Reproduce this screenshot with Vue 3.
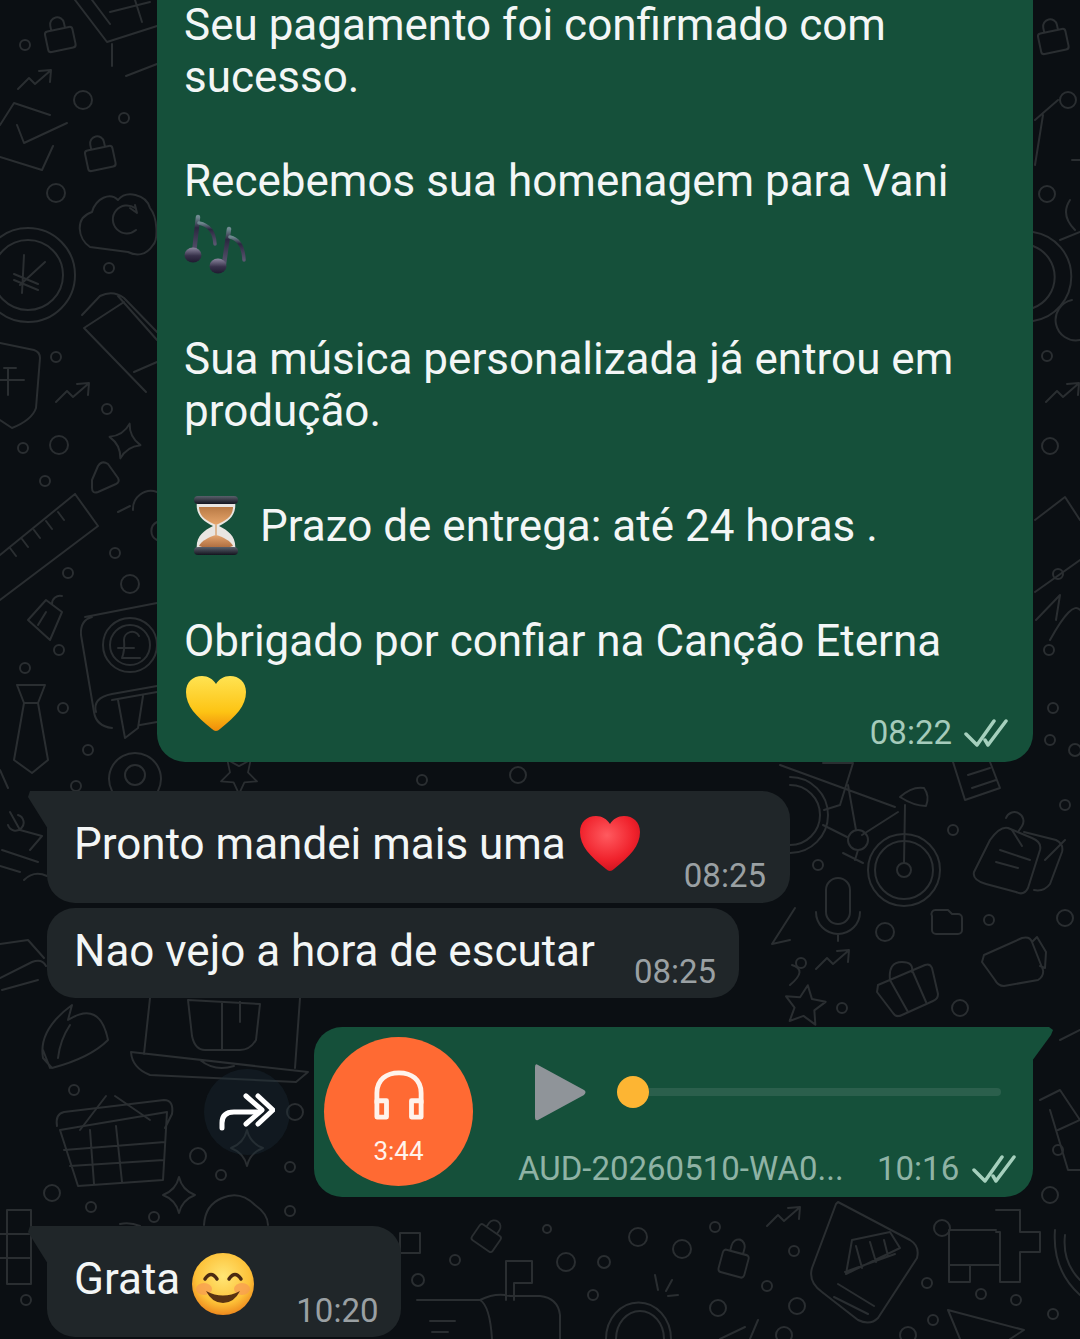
<script setup>
const dots = [
  [25,45,5],[83,100,9],[124,118,5],[56,193,9],[109,268,5],[56,357,5],[107,409,5],[59,445,9],[23,448,5],[45,481,5],
  [115,553,5],[68,573,5],[130,584,9],[59,650,5],[25,668,5],[63,708,5],[88,750,5],[76,786,5],
  [28,275,47],[28,275,35],[130,645,27],[130,645,20],
  [904,870,36],[904,870,29],[904,870,7],[858,840,10],
  [1047,194,8],[1047,356,5],[1050,446,8],[1058,574,5],[1049,650,5],[1068,100,8],[1053,708,5],
  [422,780,5],[518,775,8],[953,830,5],[818,865,5],[989,920,5],[1065,918,8],[885,932,9],[801,963,5],[842,1008,5],[960,1008,8],
  [1050,740,5],[1075,750,6],[1065,805,5],
  [74,1090,5],[198,1156,8],[221,1175,5],[290,1167,5],[295,1112,8],[52,1193,8],[91,1207,5],[154,1217,5],[290,1211,5],[26,1300,5],
  [1058,1150,5],[1050,1195,8],
  [547,1229,4],[638,1237,9],[682,1249,9],[455,1260,5],[566,1262,9],[604,1262,6],[418,1280,6],[593,1295,5],
  [715,1227,5],[794,1251,5],[767,1286,5],[718,1308,8],[797,1306,8],[942,1228,8],[927,1283,5],[981,1294,5],[1016,1300,5],[933,1320,5],[1053,1314,5],[908,1335,8],[784,1335,8]
]

const LOCK = 'M-11 -9h22a3 3 0 0 1 3 3v15a3 3 0 0 1-3 3h-22a3 3 0 0 1-3-3v-15a3 3 0 0 1 3-3zM-7 -9v-5a7 7 0 0 1 14 0v5'
const TREND = 'M-17 9L-6 -2L0 4L15 -9M4 -9L16 -10L15 2'
const STAR4 = 'M0 -18Q3 -5 16 0Q3 5 0 18Q-3 5 -16 0Q-3 -5 0 -18z'
const STAR5 = 'M0 -20L6 -7L20 -6L10 4L13 18L0 11L-13 18L-10 4L-20 -6L-6 -7z'

const shapes = [
  { t: 'translate(60 38) rotate(-12)', d: LOCK },
  { t: 'translate(100 157) rotate(-12)', d: LOCK },
  { t: 'translate(1053 40) rotate(-12)', d: LOCK },
  { t: 'translate(35 80)', d: TREND },
  { t: 'translate(73 393)', d: TREND },
  { t: 'translate(1063 393)', d: TREND },
  { t: 'translate(833 960)', d: TREND },
  { t: 'translate(784 1217)', d: TREND },
  { t: 'translate(125 441) rotate(15)', d: STAR4 },
  { t: 'translate(179 1195)', d: STAR4 },
  { t: 'translate(247 1148)', d: STAR4 },
  { t: 'translate(805 1005) rotate(8)', d: STAR5 },
  { t: 'translate(239 776) rotate(180) scale(.9)', d: STAR5 },
  { t: 'translate(487 1237) rotate(35) scale(.9)', d: LOCK },
  { t: 'translate(734 1262) rotate(15) scale(.95 1.1)', d: LOCK }
]

const lines = [
  // cart, top left
  'M75 0L107 42L157 26M92 0L110 24M135 0L142 22M110 12L150 2M112 44V66M126 76L157 64',
  // envelope check
  'M0 125L14 103L50 115M17 125L24 143L67 123M53 146L42 170L0 157',
  // cloud
  'M90 247C78 239 74 218 92 212C96 198 110 192 118 200C126 190 146 194 150 208C158 218 158 240 153 245C146 256 136 256 128 252z',
  'M135 208A14 14 0 1 0 136 230M130 208L137 213L135 205',
  // yen
  'M24 255L22 293M45 262L20 285M14 274L38 284M14 280L38 290',
  // pencil
  'M82 315L100 296C108 292 116 292 124 298L157 332M84 328L124 302M84 328L146 392M118 296L157 340M134 372L157 362',
  // shield
  'M0 343L34 350Q40 352 40 358L36 408Q32 420 12 428L0 420M16 368H4M8 368V395M0 380H24',
  // ruler
  'M75 494L98 526L0 600M0 555L75 494M10 548L16 556M22 539L28 547M34 530L40 538M46 521L52 529M58 512L64 520',
  // triangle
  'M92 480L98 466Q102 460 108 464L118 478Q120 482 116 484L98 492Q92 494 92 488z',
  // molecule
  'M133 510A18 18 0 0 1 157 492M118 512L130 506M157 540A10 10 0 0 1 157 522',
  // pin
  'M28 620L46 600L62 612L50 640zM52 604A8 8 0 0 1 62 596M38 625L46 612',
  // pound card
  'M85 617L157 603M81 635Q80 620 92 617M81 635L94 712Q96 726 112 728',
  'M139 636A8 8 0 0 0 124 640Q125 650 122 658H140M118 648H134',
  'M112 700L157 692M96 712Q92 698 112 694L157 686M118 700L125 738L138 728L143 696M157 722L140 725',
  // tie
  'M17 685H45L38 703H24zM24 703L14 760L32 773L48 760L38 703',
  'M0 770L8 788',
  // target
  'M112 791A26 26 0 1 1 158 791',
  'M125 775A9 9 0 1 0 145 775A9 9 0 1 0 125 775',
  // pin & note left
  'M10 812L20 830L42 836L30 850M18 815A8 8 0 1 1 8 825M2 850L38 862M0 866L20 872',
  'M24 880Q34 870 47 876',
  // bike
  'M790 777A38 38 0 0 1 790 853M790 785A30 30 0 0 1 790 845',
  'M780 765L895 807M848 785L856 830M898 812L862 835M823 825L847 837M905 805L904 863',
  'M823 763H853L840 805L824 810M900 797Q912 786 924 788Q930 796 926 806Q914 806 900 797M858 850L855 860M843 853L863 863',
  // receipt
  'M953 762L965 800L1000 788L990 762M968 775L990 768M972 788L996 780',
  // pin note
  'M990 840Q1000 826 1008 828L1032 838Q1042 842 1040 850L1028 888Q1024 896 1016 892L986 884Q972 880 974 872zM1024 832L1056 840Q1064 844 1062 852L1050 884Q1044 892 1034 890',
  'M1000 850L1030 860M996 862L1018 868M1012 830L1022 846M1006 818A9 9 0 1 1 1022 826L1018 832',
  // mic
  'M826 912V890A12 12 0 0 1 850 890V912A12 12 0 0 1 826 912M816 912A22 22 0 0 0 860 912M838 934V941',
  // hex behind bubble
  'M790 940L772 944L795 908M792 965Q808 970 790 985',
  // folder
  'M932 916A4 4 0 0 1 936 910H948L952 914H958A4 4 0 0 1 962 918V930A4 4 0 0 1 958 934H936A4 4 0 0 1 932 930z',
  // camera
  'M984 955L1022 938Q1030 936 1032 942L1043 970Q1044 976 1038 980L1004 986Q998 986 995 980L982 962zM1032 942L1037 937L1046 952L1045 968L1040 966',
  // suitcase
  'M878 985L925 965Q930 963 932 968L938 994Q938 999 933 1001L902 1015Q896 1018 893 1013L877 992zM890 980L908 1012M912 970L926 1002M890 980Q888 962 902 962Q914 962 912 972',
  // right bits
  'M1035 120L1058 100M1035 165L1043 115M1060 240L1080 232M1072 300A20 20 0 0 0 1080 340M1035 520L1065 497L1080 520M1035 592L1080 560M1036 620L1060 595L1056 620M1050 640Q1072 600 1080 610',
  'M1072 160H1080M1070 200Q1060 215 1075 230',
  'M1045 860L1065 840M1060 1040L1080 1030M1040 1100L1060 1090L1080 1120M1050 1110L1068 1170H1080M1058 1130L1080 1120',
  // laptop, gift, basket, flower
  'M131 1052L308 1072L296 1082L150 1075Q132 1068 131 1052M150 998L144 1054M300 998L295 1068M200 1060Q215 1072 234 1066',
  'M188 1000L260 1004L256 1040Q250 1050 240 1050H205Q195 1050 192 1036zM222 1002V1050M240 1002V1022',
  'M60 1130L167 1112L163 1180L78 1186zM57 1126Q55 1114 64 1112L164 1100Q174 1100 172 1114L165 1128M90 1130L94 1184M116 1126L122 1182M64 1150L165 1142M70 1166L164 1160',
  'M80 1130L106 1096M115 1096L150 1120',
  'M43 1058Q38 1030 72 1005L68 1020Q100 1000 108 1040Q90 1058 52 1068zM50 1068L43 1050M70 1025Q60 1040 58 1058',
  'M0 978L32 962Q42 958 46 966M0 944L28 940L44 958M2 990L38 980',
  // puzzle left
  'M7 1210H31V1284H7zM0 1234H31M0 1258H31',
  // taco
  'M204 1225Q205 1205 222 1198Q240 1190 255 1205Q268 1214 268 1225M120 1224Q130 1222 140 1226',
  // right of grata, square, flag
  'M400 1233H420V1253H400zM506 1261H532V1283H514V1300M506 1261V1300M417 1300H480Q490 1306 492 1339M430 1321H455M432 1332H448M480 1300Q496 1292 510 1296H540Q558 1298 560 1315V1339',
  // lower coin
  'M606 1339A32 36 0 1 1 671 1339M616 1339A24 28 0 1 1 664 1339M655 1275L658 1290M672 1280L666 1291M678 1295L668 1296',
  // bank doc
  'M838 1202L910 1240Q920 1246 917 1258L878 1318Q870 1326 858 1320L822 1292Q808 1282 812 1268L836 1204z',
  'M852 1240L890 1232L900 1248L846 1274zM856 1246L862 1268M870 1242L876 1262M884 1240L888 1256M845 1272L895 1254M838 1284L874 1306M834 1297L868 1314',
  // crossword
  'M996 1210H1020V1232H1040V1252H1020V1282H1000V1265H949V1230H996M1000 1265V1232H996M949 1265H970V1282H949z',
  // plane
  'M948 1310L1024 1330L1010 1339M948 1310L960 1339',
  'M1055 1230Q1052 1270 1080 1295M1065 1235Q1062 1262 1080 1280',
  'M720 1339L745 1327M750 1339L758 1320'
]

const HEART = 'M30 55Q28 55 26 53C10 40 0 30 0 16C0 6 7 0 16 0C22 0 27 3 30 8C33 3 38 0 44 0C53 0 60 6 60 16C60 30 50 40 34 53Q32 55 30 55z'
</script>

<template>
  <div class="chat">
    <svg class="doodles" width="1080" height="1339" viewBox="0 0 1080 1339" fill="none" aria-hidden="true">
      <circle v-for="(c, i) in dots" :key="'c' + i" :cx="c[0]" :cy="c[1]" :r="c[2]" />
      <path v-for="(d, i) in lines" :key="'l' + i" :d="d" />
      <path v-for="(s, i) in shapes" :key="'s' + i" :d="s.d" :transform="s.t" />
      <path d="M1033 232A45 45 0 0 1 1033 321M1033 246A33 33 0 0 1 1033 308" />
    </svg>

    <div class="stream">
      <section class="bubble out top-bubble">
        <p class="para">Seu pagamento foi confirmado com<br />sucesso.</p>
        <p class="para gap">Recebemos sua homenagem para Vani</p>
        <div class="emoji-row">
          <svg class="notes" width="62" height="60" viewBox="0 0 62 60">
            <defs>
              <linearGradient id="noteHead" x1="0" y1="0" x2="0" y2="1">
                <stop offset="0" stop-color="#8d88a0" />
                <stop offset=".55" stop-color="#37314a" />
                <stop offset="1" stop-color="#1f1a30" />
              </linearGradient>
              <linearGradient id="noteStem" x1="0" y1="0" x2="0" y2="1">
                <stop offset="0" stop-color="#6f8a90" />
                <stop offset=".3" stop-color="#2b2740" />
                <stop offset="1" stop-color="#5a5670" />
              </linearGradient>
            </defs>
            <g fill="none" stroke="url(#noteStem)" stroke-linecap="round">
              <path d="M14 3L10 39" stroke-width="4.5" />
              <path d="M15 9Q30 12 31 30" stroke-width="3.5" />
              <path d="M45 15L40 50" stroke-width="4.5" />
              <path d="M46 23Q59 26 60 46" stroke-width="3.5" />
            </g>
            <ellipse cx="9" cy="41" rx="8.5" ry="7.5" fill="url(#noteHead)" />
            <ellipse cx="34" cy="52" rx="8.5" ry="7.5" fill="url(#noteHead)" />
          </svg>
        </div>
        <p class="para gap">Sua música personalizada já entrou em<br />produção.</p>
        <div class="emoji-row gap">
          <svg class="hourglass" width="46" height="62" viewBox="0 0 46 62">
            <defs>
              <linearGradient id="glassCap" x1="0" y1="0" x2="0" y2="1">
                <stop offset="0" stop-color="#59606b" />
                <stop offset="1" stop-color="#14141f" />
              </linearGradient>
              <linearGradient id="sandTop" x1="0" y1="0" x2="0" y2="1">
                <stop offset="0" stop-color="#b97a45" />
                <stop offset="1" stop-color="#e7a66c" />
              </linearGradient>
              <linearGradient id="sandBottom" x1="0" y1="0" x2="0" y2="1">
                <stop offset="0" stop-color="#e4a56f" />
                <stop offset="1" stop-color="#a8663a" />
              </linearGradient>
            </defs>
            <path d="M4 6H42C44 20 36 26 26 31C36 36 44 42 42 56H4C2 42 10 36 20 31C10 26 2 20 4 6z" fill="#e9e6e2" />
            <path d="M6 12H40C40 22 32 26 23 30C14 26 6 22 6 12z" fill="url(#sandTop)" />
            <path d="M6 51C8 46 16 42 23 40C30 42 38 46 40 51C30 55 16 55 6 51z" fill="url(#sandBottom)" />
            <path d="M23 30V40" stroke="#d9a77a" stroke-width="1.5" />
            <rect x="1" y="1" width="44" height="8" rx="4" fill="url(#glassCap)" />
            <rect x="1" y="52" width="44" height="8" rx="4" fill="url(#glassCap)" />
          </svg>
          <span class="line">Prazo de entrega: até 24 horas .</span>
        </div>
        <p class="para gap">Obrigado por confiar na Canção Eterna</p>
        <div class="emoji-row last">
          <svg class="yellow" width="60" height="56" viewBox="0 0 60 56">
            <defs>
              <linearGradient id="yellowHeart" x1="0" y1="0" x2="0" y2="1">
                <stop offset="0" stop-color="#ffe352" />
                <stop offset=".65" stop-color="#fdc414" />
                <stop offset="1" stop-color="#f08c0a" />
              </linearGradient>
            </defs>
            <path :d="HEART" fill="url(#yellowHeart)" />
          </svg>
          <span class="meta meta-out">
            <span class="time">08:22</span>
            <svg width="44" height="28" viewBox="0 0 44 28" fill="none" stroke="#a5d0bd" stroke-width="3.5" stroke-linecap="round" stroke-linejoin="round">
              <path d="M2 15L13 26L30 2" />
              <path d="M21 21L24 26L42 2" />
            </svg>
          </span>
        </div>
      </section>

      <section class="bubble in tailed first-in">
        <span class="line">Pronto mandei mais uma</span>
        <svg class="red-heart" width="60" height="56" viewBox="0 0 60 56">
          <defs>
            <radialGradient id="redHeart" cx=".45" cy=".35" r=".75">
              <stop offset="0" stop-color="#ff5a5f" />
              <stop offset=".6" stop-color="#f0222c" />
              <stop offset="1" stop-color="#c40d1a" />
            </radialGradient>
          </defs>
          <path :d="HEART" fill="url(#redHeart)" />
        </svg>
        <span class="time time-in push-44">08:25</span>
      </section>

      <section class="bubble in second-in">
        <span class="line">Nao vejo a hora de escutar</span>
        <span class="time time-in push-39">08:25</span>
      </section>

      <div class="audio-row">
        <button class="forward" type="button" aria-label="Encaminhar">
          <svg width="56" height="38" viewBox="0 0 56 38" fill="none" stroke="#fff" stroke-width="5" stroke-linecap="round" stroke-linejoin="round">
            <path d="M3 35V30Q3 19 15 19H38" />
            <path d="M27 3L43 17L27 31" />
            <path d="M39 3L54 17L39 31" />
          </svg>
        </button>
        <section class="bubble out audio">
          <div class="cover">
            <svg width="50" height="50" viewBox="0 0 52 52" fill="none" stroke="#fff3ec" stroke-width="5" stroke-linecap="round" stroke-linejoin="round">
              <path d="M3 34V24C3 10 13 3 26 3C39 3 49 10 49 24V34" />
              <path d="M3 32H13V49H3zM39 32H49V49H39z" />
            </svg>
            <span class="cover-time">3:44</span>
          </div>
          <div class="player">
            <div class="track-row">
              <svg class="play" width="52" height="60" viewBox="0 0 52 60">
                <path d="M3 3L49 28Q52 30 49 33L3 58Q0 59 0 55V5Q0 1 3 3z" fill="#8f9499" />
              </svg>
              <div class="track">
                <span class="knob"></span>
                <span class="rail"></span>
              </div>
            </div>
            <div class="file-row">
              <span class="file">AUD-20260510-WA0...</span>
              <span class="time time-green">10:16</span>
              <svg width="44" height="28" viewBox="0 0 44 28" fill="none" stroke="#a5d0bd" stroke-width="3.5" stroke-linecap="round" stroke-linejoin="round">
                <path d="M2 15L13 26L30 2" />
                <path d="M21 21L24 26L42 2" />
              </svg>
            </div>
          </div>
        </section>
      </div>

      <section class="bubble in tailed last-in">
        <span class="line">Grata</span>
        <svg class="smile" width="62" height="62" viewBox="0 0 62 62">
          <defs>
            <radialGradient id="face" cx=".5" cy=".38" r=".62">
              <stop offset="0" stop-color="#ffe675" />
              <stop offset=".7" stop-color="#fdc138" />
              <stop offset="1" stop-color="#ee8a1e" />
            </radialGradient>
          </defs>
          <circle cx="31" cy="31" r="31" fill="url(#face)" />
          <ellipse cx="12" cy="36" rx="8" ry="6" fill="#f79a52" opacity=".7" />
          <ellipse cx="50" cy="36" rx="8" ry="6" fill="#f79a52" opacity=".7" />
          <path d="M13 26Q19 17 25 26M37 26Q43 17 49 26" fill="none" stroke="#4a2a12" stroke-width="3.5" stroke-linecap="round" />
          <path d="M14 38Q31 47 48 38Q42 50 31 50Q20 50 14 38z" fill="#5a3312" />
        </svg>
        <span class="time time-in push-42">10:20</span>
      </section>
    </div>
  </div>
</template>

<style scoped>
.chat {
  position: relative;
  width: 1080px;
  height: 1339px;
  overflow: hidden;
  background: #0b0f13;
  font-family: Roboto, "Noto Sans", sans-serif;
  color: #f3f6f6;
}
.doodles {
  position: absolute;
  inset: 0;
  stroke: #2a2e31;
  stroke-width: 2;
  stroke-linecap: round;
  stroke-linejoin: round;
}
.stream {
  position: relative;
  display: flex;
  flex-direction: column;
  margin-top: -30px;
}
.bubble {
  position: relative;
  border-radius: 28px;
}
.out { background: #15503a; }
.in {
  background: #202629;
  display: flex;
  align-self: flex-start;
  margin-left: 47px;
}
.line, .para {
  font-size: 44px;
  line-height: 52px;
  margin: 0;
  white-space: nowrap;
}
.para.gap { margin-top: 52px; }
.top-bubble {
  width: 876px;
  margin-left: 157px;
  padding: 29px 25px 21px 27px;
  box-sizing: border-box;
}
.emoji-row {
  height: 74px;
  display: flex;
  align-items: center;
  gap: 21px;
}
.emoji-row.gap { margin-top: 52px; }
.hourglass { margin-left: 9px; }
.yellow { margin-left: 2px; }
.emoji-row.last { justify-content: space-between; }
.meta {
  display: flex;
  align-items: center;
  gap: 12px;
}
.meta-out {
  align-self: flex-end;
  margin-bottom: -12px;
}
.time {
  font-size: 33px;
  line-height: 40px;
  white-space: nowrap;
}
.meta-out .time { color: #a5cbbb; }
.time-in {
  color: #9aa0a3;
  align-self: flex-end;
}
.push-44 { margin-left: 44px; }
.push-39 { margin-left: 39px; }
.push-42 { margin-left: 42px; }
.tailed { border-top-left-radius: 0; }
.tailed::before {
  content: "";
  position: absolute;
  left: -19px;
  top: 0;
  width: 20px;
  height: 38px;
  background: #202629;
  clip-path: polygon(2px 0, 100% 0, 100% 100%, 0 6px);
}
.first-in {
  margin-top: 29px;
  height: 112px;
  box-sizing: border-box;
  padding: 27px 24px 7px 27px;
}
.red-heart {
  margin: -2px 0 0 14px;
  flex: none;
}
.second-in {
  margin-top: 5px;
  height: 90px;
  box-sizing: border-box;
  padding: 17px 23px 6px 27px;
}
.audio-row {
  display: flex;
  align-items: center;
  margin: 29px 0 0 204px;
  gap: 24px;
}
.forward {
  width: 86px;
  height: 86px;
  flex: none;
  border: 0;
  padding: 0;
  border-radius: 50%;
  background: rgba(30, 46, 58, .35);
  display: flex;
  align-items: center;
  justify-content: center;
}
.audio {
  width: 719px;
  height: 170px;
  box-sizing: border-box;
  padding: 10px 0 0 10px;
  display: flex;
  border-top-right-radius: 0;
}
.audio::after {
  content: "";
  position: absolute;
  right: -20px;
  top: 0;
  width: 21px;
  height: 34px;
  background: #15503a;
  clip-path: polygon(0 0, 17px 0, 100% 3px, 19px 8px, 0 100%);
}
.cover {
  width: 149px;
  height: 149px;
  flex: none;
  border-radius: 50%;
  background: #ff6a33;
  display: flex;
  flex-direction: column;
  align-items: center;
  padding-top: 33px;
  box-sizing: border-box;
}
.cover-time {
  font-size: 26px;
  line-height: 30px;
  color: #fff3ec;
  margin-top: 16px;
}
.player {
  margin-left: 45px;
  flex: 1;
  padding-right: 17px;
  display: flex;
  flex-direction: column;
}
.track-row {
  display: flex;
  align-items: flex-start;
  margin: 25px 15px 0 17px;
}
.track {
  flex: 1;
  display: flex;
  align-items: center;
  margin: 14px 0 0 30px;
}
.knob {
  width: 32px;
  height: 32px;
  border-radius: 50%;
  background: #fdb533;
  flex: none;
}
.rail {
  flex: 1;
  height: 8px;
  border-radius: 0 4px 4px 0;
  background: #2b5f4c;
}
.file-row {
  display: flex;
  align-items: center;
  margin-top: 27px;
}
.file {
  font-size: 33px;
  line-height: 40px;
  color: #8fb3a5;
  white-space: nowrap;
  width: 359px;
}
.time-green { margin-right: 13px; color: #8fb3a5; }
.last-in {
  margin-top: 29px;
  height: 111px;
  box-sizing: border-box;
  padding: 27px 23px 6px 27px;
}
.smile {
  margin-left: 12px;
  flex: none;
}
</style>

<style>
html, body { margin: 0; background: #0b0f13; }
</style>
